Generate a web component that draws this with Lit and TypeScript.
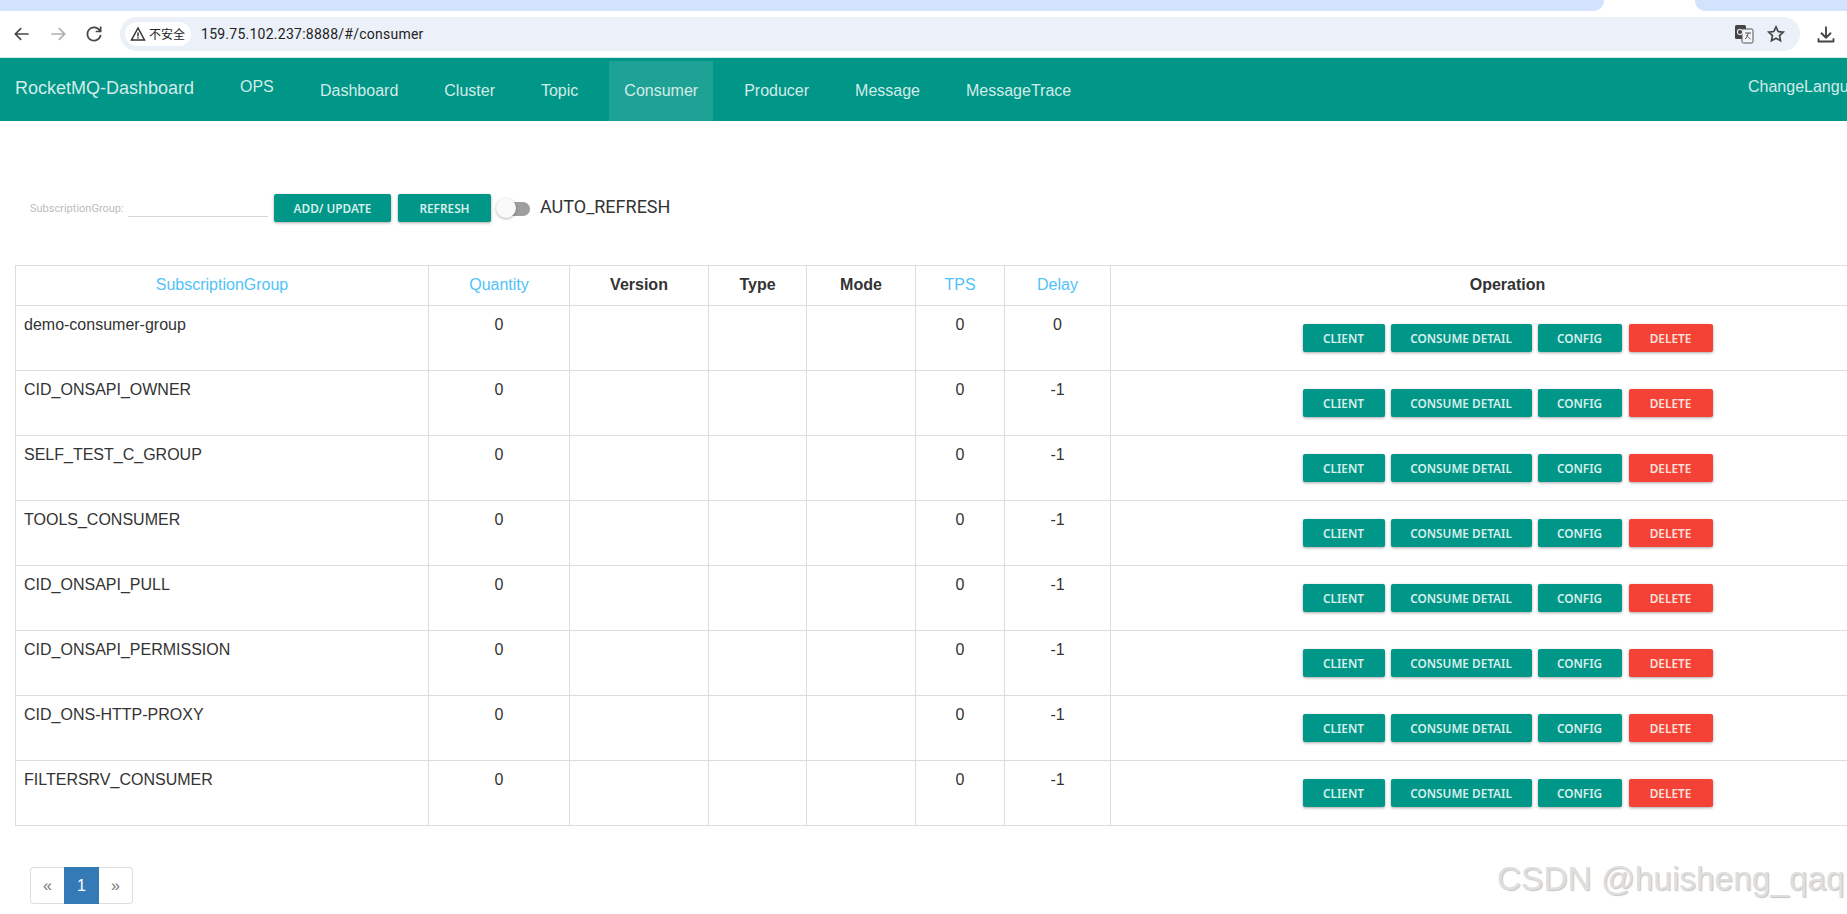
import { LitElement, html, css, svg } from "lit";
import { customElement } from "lit/decorators.js";

const rows: [string, string][] = [
  ["demo-consumer-group", "0"],
  ["CID_ONSAPI_OWNER", "-1"],
  ["SELF_TEST_C_GROUP", "-1"],
  ["TOOLS_CONSUMER", "-1"],
  ["CID_ONSAPI_PULL", "-1"],
  ["CID_ONSAPI_PERMISSION", "-1"],
  ["CID_ONS-HTTP-PROXY", "-1"],
  ["FILTERSRV_CONSUMER", "-1"],
];
const navItems = ["Dashboard", "Cluster", "Topic", "Consumer", "Producer", "Message", "MessageTrace"];

@customElement("app-root")
export class AppRoot extends LitElement {
  static styles = css`
    :host {
      display: block;
      position: relative;
      width: 1847px;
      height: 914px;
      overflow: hidden;
      background: #fff;
      font-family: "Liberation Sans", Arial, sans-serif;
      color: #333;
    }
    .tabs { height: 11px; background: #fff; display: flex; }
    .tab { background: #d3e3fd; height: 11px; }
    .tab.a { width: 1604px; border-radius: 0 0 10px 0; }
    .tab.b { width: 152px; margin-left: 91px; border-radius: 0 0 0 10px; }
    .toolbar {
      height: 47px; background: #fff; display: flex; align-items: center;
      box-sizing: border-box; padding: 0 0 1px 12px;
      border-bottom: 1px solid #cfe9e4;
    }
    .tb-icon { width: 20px; height: 20px; display: block; flex: none; }
    .tb-nav { display: flex; gap: 16px; align-items: center; width: 108px; flex: none; }
    .omni {
      flex: none; width: 1680px; height: 34px; border-radius: 17px; background: #ebf0f9;
      display: flex; align-items: center; box-sizing: border-box; padding-left: 5px;
    }
    .chip {
      background: #fff; height: 24px; border-radius: 12px; display: flex; align-items: center;
      padding: 0 6px 0 5px; gap: 3px; font: 12px "Noto Sans CJK SC", "Liberation Sans", sans-serif; color: #222;
    }
    .url { margin-left: 10px; font: 14px "Roboto", sans-serif; color: #222; letter-spacing: 0.25px; }
    .omni-right { margin-left: auto; display: flex; align-items: center; gap: 12px; padding-right: 14px; }
    .dl { margin-left: 16px; }

    nav {
      height: 63px; background: #009688; display: flex; color: #d3ece8; white-space: nowrap;
      box-sizing: border-box; padding-left: 15px; position: relative;
    }
    .brand { font-size: 18px; margin-top: 20px; width: 225px; flex: none; line-height: 20px; }
    .ops { font-size: 16px; margin-top: 20px; width: 57px; flex: none; line-height: 18px; }
    .nav-item { font-size: 16px; padding: 0 23px; height: 60px; margin-top: 3px; display: flex; align-items: center; box-sizing: border-box; }
    .nav-item.active { background: rgba(255,255,255,0.12); padding: 0 15px; margin: 3px 8px 0 8px; }
    .nav-list { display: flex; margin-left: 0; }
    .lang { position: absolute; left: 1748px; top: 20px; font-size: 16px; line-height: 18px; }

    .filter {
      display: flex; align-items: flex-start; margin: 73px 0 0 30px; height: 29px;
    }
    .filter-label { font: 11px Roboto, sans-serif; color: #bdbdbd; margin-top: 8px; width: 98px; flex: none; }
    .filter-input { width: 140px; height: 22px; border-bottom: 1px solid #d8d8d8; flex: none; margin-right: 6px; }
    .btn {
      background: #009688; color: #d6efeb; border-radius: 2px; border: 0; height: 28px;
      font: 600 11.8px "Noto Sans", sans-serif; letter-spacing: 0; padding: 0; flex: none;
      box-shadow: 0 1px 3px rgba(0,0,0,0.35);
      display: flex; align-items: center; justify-content: center;
    }
    .btn.red { background: #f44336; color: #fde0dd; }
    .toggle { position: relative; width: 36px; height: 22px; margin: 3px 0 0 5px; flex: none; }
    .track { position: absolute; left: 4px; top: 5px; width: 30px; height: 14px; border-radius: 7px; background: #9e9e9e; }
    .thumb { position: absolute; left: 0; top: 1px; width: 20px; height: 20px; border-radius: 50%; background: #fafafa; box-shadow: 0 1px 3px rgba(0,0,0,0.3); }
    .auto { font: 18px Roboto, sans-serif; color: #333; margin: 2px 0 0 8px; line-height: 22px; }

    table {
      border-collapse: collapse; table-layout: fixed; width: 1890px; margin: 42px 0 0 15px;
      font-size: 16px;
    }
    th, td { border: 1px solid #ddd; box-sizing: border-box; padding: 8px; line-height: 21px; vertical-align: top; }
    th { height: 40px; text-align: center; font-size: 16px; font-weight: 700; color: #333; }
    th.sort { color: #4fc3f7; font-weight: 400; }
    td { height: 65px; text-align: center; color: #333; }
    td.name { text-align: left; }
    .ops-cell { display: flex; justify-content: center; gap: 6px; margin-top: 10px; }
    .ops-cell .btn { height: 28px; }
    .w-client { width: 82px; }
    .w-detail { width: 141px; }
    .w-config { width: 84px; margin-right: 1px; }
    .w-delete { width: 84px; }

    .pager { display: flex; margin: 41px 0 0 30px; width: max-content; font-size: 16px; height: 37px; }
    .pager div { box-sizing: border-box; display: flex; align-items: center; justify-content: center; height: 37px; border: 1px solid #ddd; color: #777; }
    .pager .prev { width: 34px; border-radius: 4px 0 0 4px; border-right: 0; }
    .pager .cur { width: 35px; background: #337ab7; border-color: #337ab7; color: #fff; }
    .pager .next { width: 34px; border-radius: 0 4px 4px 0; border-left: 0; }

    .mark {
      position: absolute; left: 1497px; top: 860px; font-size: 33.4px; line-height: 38px; color: #dedede;
      text-shadow: 1px 1px 1px #c4c4c4; white-space: nowrap; font-family: "Liberation Sans", sans-serif;
    }
  `;

  private icon(d: string, color: string, extra = "") {
    return html`<svg class="tb-icon ${extra}" viewBox="0 0 24 24" fill="none" stroke=${color} stroke-width="2">${svg`<path d=${d}></path>`}</svg>`;
  }

  render() {
    return html`
      <div class="tabs"><div class="tab a"></div><div class="tab b"></div></div>
      <div class="toolbar">
        <div class="tb-nav">
          ${this.icon("M20 12H5M11 5l-7 7 7 7", "#474747")}
          ${this.icon("M4 12h15M13 5l7 7-7 7", "#b0b0b0")}
          ${this.icon("M19 8a8 8 0 1 0 1 5M20 3v6h-6", "#474747")}
        </div>
        <div class="omni">
          <div class="chip">
            <svg width="16" height="16" viewBox="0 0 16 16" fill="none" stroke="#333" stroke-width="1.5"><path d="M8 2 1.5 14h13z"></path><path d="M8 6.500v4M8 11.200v1.400"></path></svg>
            不安全
          </div>
          <div class="url">159.75.102.237:8888/#/consumer</div>
          <div class="omni-right">
            <svg width="20" height="20" viewBox="0 0 20 20"><rect x="1" y="1" width="11" height="14" rx="1.500" fill="#444"></rect><rect x="8" y="5" width="11" height="14" rx="1.500" fill="#f2f4f8" stroke="#555" stroke-width="1"></rect><circle cx="6" cy="8" r="2.600" fill="none" stroke="#ddd" stroke-width="1.200"></circle><path d="M11 9h6M14 9c0 3-1.500 5-3 6M12.500 11c1 2 2.500 3 4 4" fill="none" stroke="#555" stroke-width="1"></path></svg>
            <svg width="20" height="20" viewBox="0 0 24 24" fill="none" stroke="#444" stroke-width="2"><path d="M12 3.500l2.600 5.600 6.100.7-4.500 4.200 1.200 6-5.400-3-5.400 3 1.200-6-4.500-4.200 6.100-.7z"></path></svg>
          </div>
        </div>
        <svg class="tb-icon dl" viewBox="0 0 24 24" fill="none" stroke="#444" stroke-width="2.200"><path d="M12 3v13M6 10.500l6 6 6-6M3 17v4h18v-4" stroke-linejoin="round"></path></svg>
      </div>
      <nav>
        <div class="brand">RocketMQ-Dashboard</div>
        <div class="ops">OPS</div>
        <div class="nav-list">
          ${navItems.map(
            (n) => html`<div class="nav-item ${n === "Consumer" ? "active" : ""}"><span>${n}</span></div>`
          )}
        </div>
        <div class="lang">ChangeLanguage</div>
      </nav>
      <div class="filter">
        <div class="filter-label">SubscriptionGroup:</div>
        <div class="filter-input"></div>
        <div class="btn" style="width:117px">ADD/ UPDATE</div>
        <div class="btn" style="width:93px;margin-left:7px">REFRESH</div>
        <div class="toggle"><div class="track"></div><div class="thumb"></div></div>
        <div class="auto">AUTO_REFRESH</div>
      </div>
      <table>
        <colgroup>
          <col style="width:413px" /><col style="width:141px" /><col style="width:139px" /><col style="width:98px" />
          <col style="width:109px" /><col style="width:89px" /><col style="width:106px" /><col style="width:794px" />
        </colgroup>
        <thead>
          <tr>
            <th class="sort">SubscriptionGroup</th><th class="sort">Quantity</th><th>Version</th><th>Type</th>
            <th>Mode</th><th class="sort">TPS</th><th class="sort">Delay</th><th>Operation</th>
          </tr>
        </thead>
        <tbody>
          ${rows.map(
            ([name, delay]) => html`<tr>
              <td class="name">${name}</td><td>0</td><td></td><td></td><td></td><td>0</td><td>${delay}</td>
              <td>
                <div class="ops-cell">
                  <div class="btn w-client">CLIENT</div>
                  <div class="btn w-detail">CONSUME DETAIL</div>
                  <div class="btn w-config">CONFIG</div>
                  <div class="btn red w-delete">DELETE</div>
                </div>
              </td>
            </tr>`
          )}
        </tbody>
      </table>
      <div class="pager"><div class="prev">«</div><div class="cur">1</div><div class="next">»</div></div>
      <div class="mark">CSDN @huisheng_qaq</div>
    `;
  }
}
